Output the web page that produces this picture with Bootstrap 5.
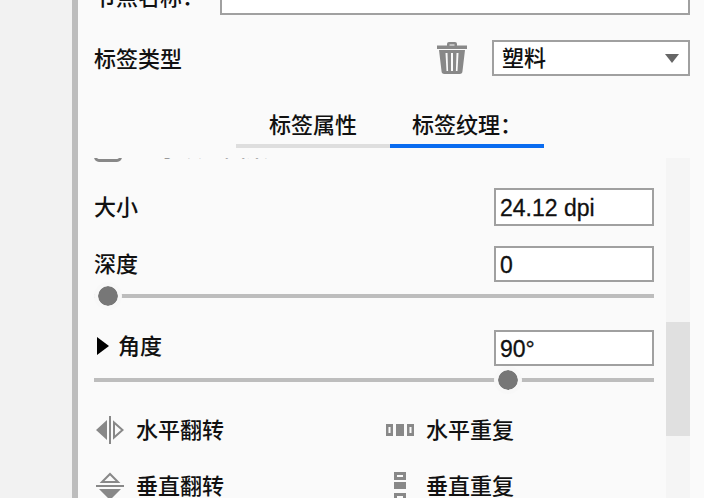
<!DOCTYPE html>
<html lang="zh-CN">

<head>
    <meta charset="utf-8" />
    <meta name="viewport" content="width=device-width, initial-scale=1" />
    <title>标签纹理</title>
    <link href="https://cdn.jsdelivr.net/npm/bootstrap@5.3.3/dist/css/bootstrap.min.css" rel="stylesheet" />
    <style>
        html, body { height: 498px; overflow: hidden; }
        body { background: #f2f2f2; font-family: "Liberation Sans", "Noto Sans CJK SC", sans-serif; font-size: 22px; font-weight: 500; color: #111; }
        .shell { height: 498px; margin-left: 72px; border-left: 6px solid #bdbdbd; background: #fafafa; padding: 0 14px 0 16px; overflow: hidden; }
        .name-row { height: 36px; margin-top: -21px; }
        .name-label { width: 126px; }
        .plain-input { height: 36px; border: 2px solid #a0a0a0; border-radius: 0; background: #fff; padding: 2px 4px 0; font-size: 23px; font-weight: 500; color: #111; line-height: 1; box-shadow: none; -webkit-text-stroke: 0.3px #111; }
        .type-row { height: 36px; margin-top: 25px; }
        .type-label { padding-top: 2px; }
        .trash-icon { width: 32px; height: 34px; margin-right: 24px; }
        .type-select { width: 198px; height: 36px; padding: 0 8px; font-size: 22px; font-weight: 500; color: #111; border: 2px solid #a0a0a0; border-radius: 0;
            background-image: url("data:image/svg+xml,%3Csvg xmlns='http://www.w3.org/2000/svg' viewBox='0 0 14 9'%3E%3Cpath fill='%23666' d='M0 0h14L7 9z'/%3E%3C/svg%3E");
            background-size: 14px 9px; background-position: right 9px center; }
        .tab-strip { margin: 28px 0 10px 142px; width: 308px; }
        .tab-item { width: 154px; height: 44px; border-bottom: 4px solid #dedede; text-align: center; line-height: 43px; color: #111; text-decoration: none; }
        .tab-item.active { border-bottom-color: #0a6cf0; }
        .scroll-box { height: 340px; overflow: hidden; }
        .scroll-body { width: 572px; padding-right: 12px; overflow: hidden; }
        .scroll-rail { width: 24px; background: #f5f5f5; }
        .scroll-grip { height: 114px; margin-top: 164px; background: #e0e0e0; }
        .clip-row { height: 28px; margin-top: -24px; color: #999; line-height: 30px; }
        .clip-check { width: 28px; height: 28px; border: 3px solid #888; border-radius: 5px; margin-right: 14px; }
        .field-input { width: 160px; }
        .size-row { height: 38px; margin-top: 26px; }
        .size-row .plain-input { height: 38px; }
        .depth-row { height: 36px; margin-top: 20px; }
        .angle-row { height: 36px; margin-top: 22px; }
        .angle-row .angle-label { margin-top: -4px; }
        .arrow-mark { width: 0; height: 0; border-left: 12px solid #000; border-top: 9px solid transparent; border-bottom: 9px solid transparent; margin: 0 9px 0 3px; }
        .tex-range { display: block; height: 24px; margin-top: 2px; }
        .tex-range::-webkit-slider-runnable-track { height: 4px; background: #bdbdbd; border-radius: 0; }
        .tex-range::-webkit-slider-thumb { width: 28px; height: 28px; margin-top: -12px; background: #777; background-clip: padding-box; border: 4px solid #f8f8f8; border-radius: 50%; box-shadow: none; }
        .tool-row { height: 32px; }
        .tool-row-a { margin-top: 22px; }
        .tool-row-b { margin-top: 24px; }
        .tool-cell { width: 290px; flex-shrink: 0; }
        .tool-icon { width: 30px; height: 32px; margin-right: 12px; }
    </style>
</head>

<body>
    <div class="shell">
        <div class="name-row d-flex align-items-center">
            <div class="name-label">节点名称：</div>
            <input class="plain-input form-control flex-grow-1 w-auto" type="text" />
        </div>

        <div class="type-row d-flex align-items-center">
            <div class="type-label flex-grow-1">标签类型</div>
            <svg class="trash-icon" viewBox="0 0 32 34">
                <path fill="#888" d="M1 4.500h30v3.500H1zM11 5V3a2 2 0 0 1 2-2h6a2 2 0 0 1 2 2v2h-2.500V3.500h-5V5z" />
                <path fill="#888" d="M3 9h26L26.500 30a3 3 0 0 1-3 3H8.500a3 3 0 0 1-3-3z" />
                <path fill="#fafafa" d="M9.500 12h2l.6 18H10.500zM15 12h2v18h-2zM20.500 12h2l-1 18h-1.600z" />
            </svg>
            <select class="type-select form-select">
                <option>塑料</option>
            </select>
        </div>

        <div class="tab-strip nav">
            <a class="tab-item" href="#">标签属性</a>
            <a class="tab-item active" href="#">标签纹理：</a>
        </div>

        <div class="scroll-box d-flex">
            <div class="scroll-body">
                <div class="clip-row d-flex">
                    <div class="clip-check"></div>
                    <div>显示纹理图案</div>
                </div>

                <div class="size-row d-flex align-items-center justify-content-between">
                    <div>大小</div>
                    <input class="plain-input field-input form-control" type="text" value="24.12 dpi" />
                </div>

                <div class="depth-row d-flex align-items-center justify-content-between">
                    <div>深度</div>
                    <input class="plain-input field-input form-control" type="text" value="0" />
                </div>
                <input class="tex-range form-range" type="range" min="0" max="100" step="0.01" value="0" />

                <div class="angle-row d-flex align-items-center justify-content-between">
                    <div class="angle-label d-flex align-items-center"><span class="arrow-mark"></span>角度</div>
                    <input class="plain-input field-input form-control" type="text" value="90°" />
                </div>
                <input class="tex-range form-range" type="range" min="0" max="100" step="0.01" value="75.19" />

                <div class="tool-row tool-row-a d-flex">
                    <div class="tool-cell d-flex align-items-center">
                        <svg class="tool-icon" viewBox="0 0 30 32">
                            <path fill="#888" d="M15 2h2v28h-2zM13 6v20L2 16z" />
                            <path fill="none" stroke="#888" stroke-width="2" d="M20 8.500v15l8.500-7.500z" />
                        </svg>
                        水平翻转
                    </div>
                    <div class="tool-cell d-flex align-items-center">
                        <svg class="tool-icon" viewBox="0 0 30 32">
                            <path fill="#888" d="M2 10h7v12H2zM12 10h8v12h-8zM23 10h7v12h-7z" />
                            <path fill="#fafafa" d="M4.500 13h2v6h-2zM25.500 13h2v6h-2z" />
                        </svg>
                        水平重复
                    </div>
                </div>

                <div class="tool-row tool-row-b d-flex">
                    <div class="tool-cell d-flex align-items-center">
                        <svg class="tool-icon" viewBox="0 0 30 32">
                            <path fill="#888" d="M2 15h28v2H2zM5 19h22L16 30z" />
                            <path fill="none" stroke="#888" stroke-width="2" d="M8 12h16L16 4z" />
                        </svg>
                        垂直翻转
                    </div>
                    <div class="tool-cell d-flex align-items-center">
                        <svg class="tool-icon" viewBox="0 0 30 32">
                            <path fill="#888" d="M10 2h12v8H10zM10 12h12v7H10zM10 23h12v8H10z" />
                            <path fill="#fafafa" d="M13 5h6v2h-6zM13 26h6v2h-6z" />
                        </svg>
                        垂直重复
                    </div>
                </div>
            </div>
            <div class="scroll-rail">
                <div class="scroll-grip"></div>
            </div>
        </div>
    </div>

    <script src="https://cdn.jsdelivr.net/npm/bootstrap@5.3.3/dist/js/bootstrap.bundle.min.js"></script>
</body>

</html>
